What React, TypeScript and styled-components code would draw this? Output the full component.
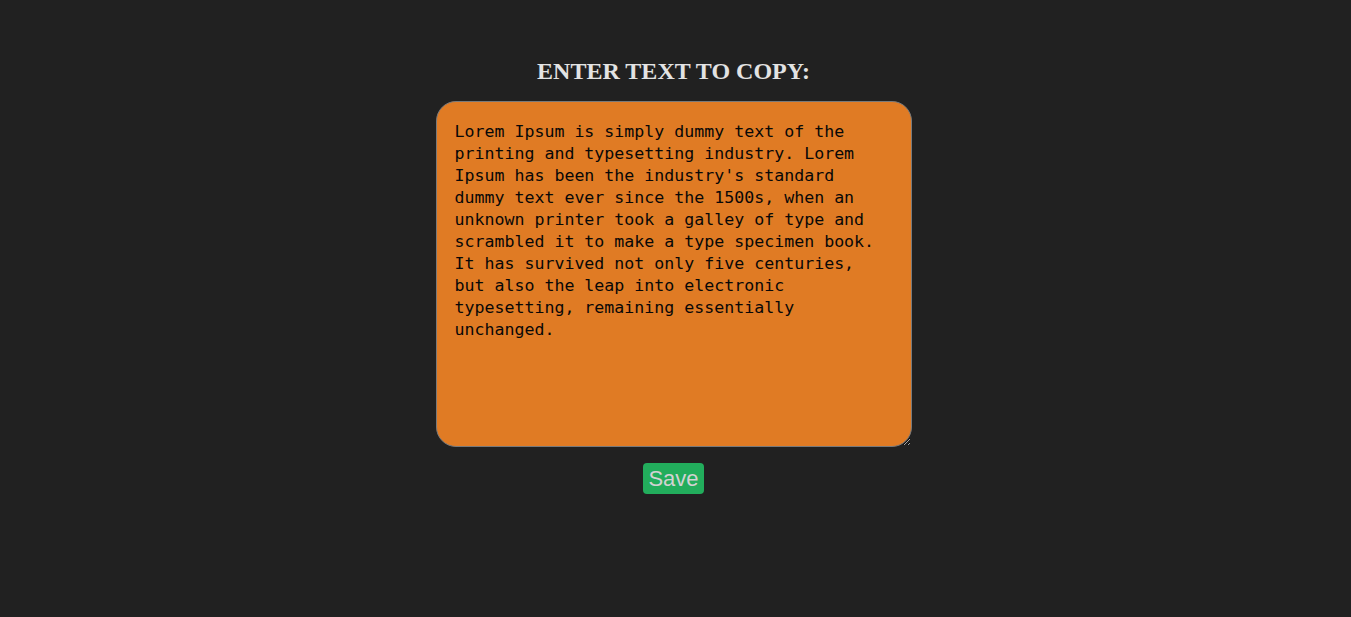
import React, { useState } from "react";
import styled, { createGlobalStyle } from "styled-components";

const GlobalStyle = createGlobalStyle`
  html, body {
    margin: 0;
    padding: 0;
    background: #212121;
  }
`;

const Page = styled.div`
  min-height: 617px;
  display: flex;
  flex-direction: column;
  align-items: center;
  padding: 58px 4px 0 0;
  box-sizing: border-box;
`;

const Title = styled.h2`
  margin: 0 0 16px;
  font-family: "Liberation Serif", "Times New Roman", serif;
  font-size: 24px;
  font-weight: bold;
  line-height: 27px;
  color: #e3e3e3;
`;

const TextBox = styled.textarea`
  width: 476px;
  height: 346px;
  box-sizing: border-box;
  padding: 19px 18px 18px;
  border: 1px solid #7a7a7a;
  border-radius: 20px;
  background: #e07b24;
  color: #080808;
  font-family: "DejaVu Sans Mono", "Liberation Mono", monospace;
  font-size: 16.6px;
  line-height: 22px;
  outline: none;
`;

const SaveButton = styled.button`
  margin-top: 16px;
  padding: 0 5px;
  height: 31px;
  border: none;
  border-radius: 4px;
  background: #22ad5c;
  color: #d2d2d2;
  font-family: "Liberation Sans", Arial, sans-serif;
  font-size: 22px;
  cursor: pointer;
`;

const initialText =
  "Lorem Ipsum is simply dummy text of the printing and typesetting industry. Lorem Ipsum has been the industry's standard dummy text ever since the 1500s, when an unknown printer took a galley of type and scrambled it to make a type specimen book. It has survived not only five centuries, but also the leap into electronic typesetting, remaining essentially unchanged.";

export default function App() {
  const [text, setText] = useState(initialText);

  return (
    <>
      <GlobalStyle />
      <Page>
        <Title>ENTER TEXT TO COPY:</Title>
        <TextBox value={text} onChange={(e) => setText(e.target.value)} />
        <SaveButton onClick={() => navigator.clipboard?.writeText(text)}>
          Save
        </SaveButton>
      </Page>
    </>
  );
}
